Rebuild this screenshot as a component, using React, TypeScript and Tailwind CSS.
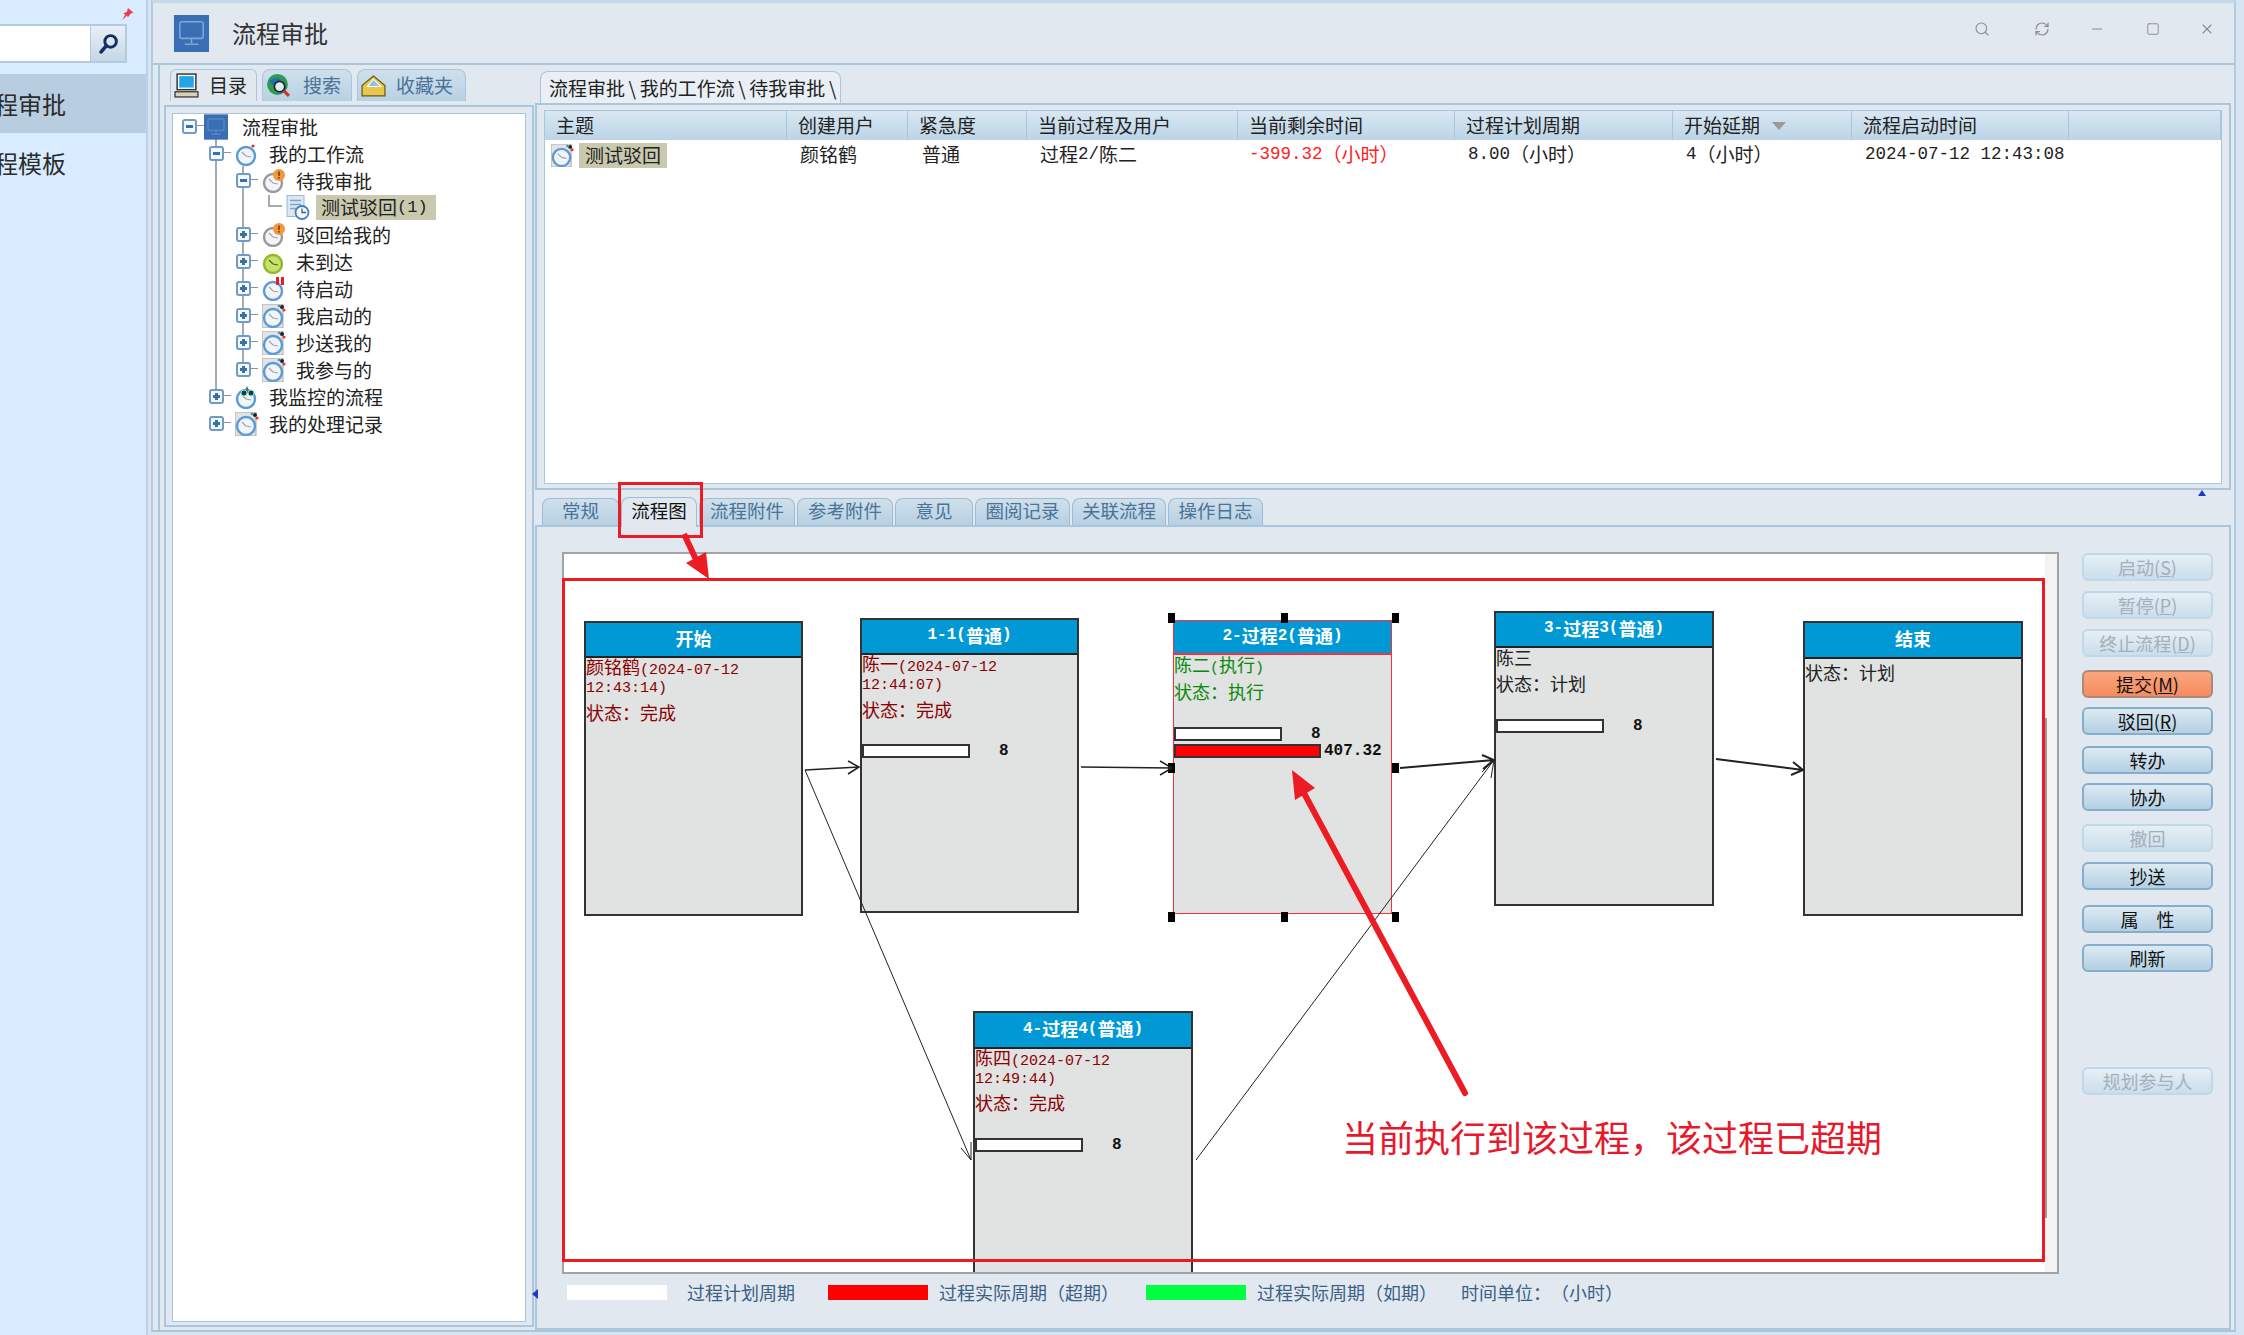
import React from "react";
import { Search, RefreshCw, Minus, Square, X } from "lucide-react";

const Mono = ({ children, className = "" }: { children: React.ReactNode; className?: string }) => (
  <span className={"font-['Liberation_Mono'] leading-[0] " + className}>{children}</span>
);

type ClockKind = "blue" | "warn" | "green" | "alert" | "framed" | "watch";

function Clock({ kind, size = 24 }: { kind: ClockKind; size?: number }) {
  const ring = kind === "warn" ? "#9a9a9a" : kind === "green" ? "#8dba2e" : "#5d9ad6";
  return (
    <svg width={size} height={size} viewBox="0 0 24 24" className="block shrink-0">
      {kind === "framed" && <rect x="0" y="0" width="21" height="24" fill="#e3e3e3" stroke="#9a9a9a" strokeWidth="0.8" />}
      {kind === "framed" && (
        <>
          <circle cx="20" cy="3" r="2" fill="#222" />
          <circle cx="22" cy="6" r="1.6" fill="#e33" />
          <circle cx="17" cy="2" r="1.3" fill="#39c" />
        </>
      )}
      <circle cx="11" cy="14" r="9" fill={kind === "green" ? "#cbe06a" : "#f1f4f8"} stroke={ring} strokeWidth="2.4" />
      <path d="M11 14 L7 10 M11 14 L16 15" stroke={kind === "green" ? "#3d6b10" : "#a3a3a3"} strokeWidth="1.2" fill="none" />
      {kind === "blue" && <circle cx="18" cy="4" r="1.6" fill="#d33" />}
      {kind === "warn" && (
        <>
          <circle cx="17" cy="6" r="6" fill="#f0993a" />
          <rect x="16.2" y="2.5" width="1.6" height="4.5" fill="#7a3a08" />
          <rect x="16.2" y="8" width="1.6" height="1.6" fill="#7a3a08" />
        </>
      )}
      {kind === "alert" && (
        <>
          <rect x="14" y="0" width="3" height="8" fill="#e0202a" />
          <rect x="19" y="0" width="3" height="8" fill="#e0202a" />
        </>
      )}
      {kind === "watch" && (
        <>
          <path d="M9 8 L12 1 L15 8 Z" fill="#666" />
          <circle cx="9" cy="8" r="3" fill="#333" stroke="#6fe" strokeWidth="1" />
          <circle cx="16" cy="8" r="3" fill="#333" stroke="#6fe" strokeWidth="1" />
        </>
      )}
    </svg>
  );
}

function MonitorTile({ className, stroke }: { className: string; stroke: string }) {
  return (
    <svg viewBox="0 0 36 38" className={"block shrink-0 " + className}>
      <rect width="36" height="38" fill="#3a6fb5" />
      <rect x="6" y="7" width="24" height="17" rx="2" fill="none" stroke={stroke} strokeWidth="1.6" />
      <path d="M18 24 V29 M11 30 H25" stroke={stroke} strokeWidth="1.6" fill="none" />
    </svg>
  );
}

function Toggle({ open }: { open: boolean }) {
  return (
    <span className="relative block w-[15px] h-[15px] shrink-0 rounded-[3px] border-2 border-[#6f9bc4] bg-[#f5f9fc]">
      <span className="absolute left-[2px] top-[4px] w-[7px] h-[3px] bg-[#3a6fa8]" />
      {!open && <span className="absolute left-[4px] top-[2px] w-[3px] h-[7px] bg-[#3a6fa8]" />}
      <span className="absolute left-[13px] top-[4px] w-[7px] h-px bg-[#8a929a]" />
    </span>
  );
}

function TreeRow({ level, open, icon, label }: { level: 0 | 1 | 2; open: boolean; icon: React.ReactNode; label: string }) {
  const pad = level === 0 ? "pl-[9px]" : level === 1 ? "pl-[36px]" : "pl-[63px]";
  return (
    <div className={"relative flex items-center h-[27px] " + pad}>
      <Toggle open={open} />
      <span className="ml-[11px] w-[24px] flex items-center">{icon}</span>
      <span className="ml-[10px] text-[19px] leading-[27px] text-[#222] whitespace-nowrap">{label}</span>
    </div>
  );
}

const HEAD = ["主题", "创建用户", "紧急度", "当前过程及用户", "当前剩余时间", "过程计划周期", "开始延期", "流程启动时间", ""];

function Slash() {
  return <span className="inline-block w-[19px] text-center">\</span>;
}

function Btn({ children, state = "on", className = "" }: { children: React.ReactNode; state?: "on" | "off" | "hot"; className?: string }) {
  const look =
    state === "on"
      ? "border-[#86aecb] from-[#dceaf3] to-[#b4cfe2] text-[#111]"
      : state === "off"
      ? "border-[#c0d8e8] from-[#e6eff5] to-[#cadeeb] text-[#a3afba]"
      : "border-[#a98a7c] from-[#fba57e] to-[#f58c5d] text-[#111]";
  return (
    <div className={"flex items-center justify-center h-[28px] rounded-[6px] border-2 bg-gradient-to-b text-[18px] leading-none whitespace-nowrap " + look + " " + className}>
      {children}
    </div>
  );
}

function Bar({ value, red = false, mt = "mt-[27px]" }: { value: string; red?: boolean; mt?: string }) {
  return (
    <div className={"flex items-center h-[14px] " + mt}>
      <div className={"h-[14px] border-2 border-[#333] " + (red ? "w-[147px] bg-[#ff0000]" : "w-[108px] bg-white")} />
      <span className={"font-['Liberation_Mono'] font-bold text-[16px] text-[#111] " + (red ? "ml-[3px]" : "ml-[29px]")}>{value}</span>
    </div>
  );
}

function Node({ pos, headH, title, tone, selected = false, children }: { pos: string; headH: string; title: React.ReactNode; tone: string; selected?: boolean; children: React.ReactNode }) {
  return (
    <div className={"absolute flex flex-col bg-[#e1e2e2] " + pos + " " + (selected ? "border border-[#f5303f]" : "border-2 border-[#333]")}>
      <div className={"flex items-center justify-center shrink-0 bg-[#0099d5] text-white font-bold text-[18px] pb-[3px] " + headH + " " + (selected ? "border-b-2 border-[#f5303f]" : "border-b-2 border-[#222]")}>
        {title}
      </div>
      <div className={"flex-1 text-[18px] leading-[18px] whitespace-nowrap " + tone}>{children}</div>
    </div>
  );
}

function Handle({ pos }: { pos: string }) {
  return <span className={"absolute w-[7px] h-[10px] bg-black " + pos} />;
}

const BOTTOM_TABS = [
  ["常规", "w-[77px]"],
  ["流程图", "w-[76px]"],
  ["流程附件", "w-[96px]"],
  ["参考附件", "w-[96px]"],
  ["意见", "w-[78px]"],
  ["圈阅记录", "w-[95px]"],
  ["关联流程", "w-[94px]"],
  ["操作日志", "w-[95px]"],
];

export default function App() {
  return (
    <div className="relative flex w-[2244px] h-[1335px] overflow-hidden bg-[#d6e5f1] text-[#222] font-['Noto_Sans_CJK_SC','Noto_Sans',sans-serif]">
      {/* sidebar */}
      <aside className="relative w-[148px] shrink-0 overflow-hidden bg-[#d8ebff] border-r-2 border-[#bcd2e4]">
        <svg viewBox="0 0 14 14" className="absolute left-[120px] top-[8px] w-[14px] h-[13px]">
          <path d="M8 0 L14 5 L11 6 L8 10 L7 8 L2 13 L5 7 L3 6 L7 4 Z" fill="#f0394a" />
        </svg>
        <div className="flex mt-[24px] h-[39px] w-[127px] border-2 border-l-0 border-[#b4cbde]">
          <div className="w-[90px] bg-white" />
          <div className="flex-1 flex items-center justify-center bg-gradient-to-b from-[#e8f0f6] to-[#c6d7e5] border-l border-[#b4cbde]">
            <svg viewBox="0 0 20 20" className="w-[21px] h-[21px]">
              <circle cx="12" cy="8" r="5.5" fill="none" stroke="#12305f" strokeWidth="2.8" />
              <path d="M8 12 L3 18" stroke="#12305f" strokeWidth="3.4" strokeLinecap="round" />
            </svg>
          </div>
        </div>
        <div className="mt-[11px] h-[59px] bg-[#b8cde0] flex items-center">
          <span className="-ml-[30px] text-[24px] text-[#2b2b2b] whitespace-nowrap">流程审批</span>
        </div>
        <div className="h-[59px] flex items-center">
          <span className="-ml-[30px] text-[24px] text-[#2b2b2b] whitespace-nowrap">流程模板</span>
        </div>
      </aside>

      {/* main window */}
      <main className="ml-[3px] w-[2085px] h-[1332px] flex flex-col bg-[#e1e8f0] border-t-[3px] border-[#c3d8e8] border-r-2 border-r-[#b1cbdf] border-l-2 border-l-[#b1cbdf] border-b-2 border-b-[#a9c6dc]">
        <header className="flex items-center h-[62px] shrink-0 border-b-2 border-[#a9c6dc]">
          <MonitorTile className="ml-[20px] w-[37px] h-[37px]" stroke="#7fa6d4" />
          <h1 className="ml-[22px] text-[24px] font-normal text-[#333]">流程审批</h1>
          <div className="ml-auto flex items-center text-[#8c8c8c] pr-[19px] pb-[8px]">
            <Search size={16} strokeWidth={1.6} />
            <RefreshCw size={16} strokeWidth={1.8} className="ml-[44px]" />
            <Minus size={16} strokeWidth={1.6} className="ml-[39px]" />
            <Square size={14} strokeWidth={1.6} className="ml-[41px]" />
            <X size={16} strokeWidth={1.6} className="ml-[39px]" />
          </div>
        </header>

        <div className="flex flex-1 min-h-0">
          {/* left panel */}
          <section className="w-[377px] shrink-0 ml-[5px] flex flex-col border-l-2 border-[#a9c6dc] pt-[4px]">
            <div className="flex h-[32px] pl-[10px] items-stretch">
              <div className="flex items-center w-[87px] rounded-t-[6px] border border-b-0 border-[#a9c6dc] bg-[#e1e8f0]">
                <svg viewBox="0 0 24 24" className="ml-[3px] w-[25px] h-[25px]">
                  <rect x="3" y="1" width="18" height="15" fill="#fff" stroke="#333" strokeWidth="1.4" />
                  <rect x="5" y="3" width="14" height="11" fill="#22a6e8" />
                  <rect x="1" y="18" width="22" height="5" fill="#d8d2b8" stroke="#333" strokeWidth="1.2" />
                </svg>
                <span className="ml-[10px] text-[19px] text-[#222]">目录</span>
              </div>
              <div className="ml-[5px] flex items-center w-[90px] rounded-t-[8px] border border-b-0 border-[#a9c6dc] bg-gradient-to-b from-[#cfe0ec] to-[#b8d1e3]">
                <svg viewBox="0 0 24 24" className="ml-[3px] w-[25px] h-[25px]">
                  <circle cx="11" cy="11" r="10" fill="#2e9b55" />
                  <path d="M3 8 Q9 3 14 6 Q10 11 6 11 Z M12 16 Q17 12 20 14 Q17 20 13 20 Z" fill="#1f6fb8" />
                  <circle cx="13" cy="13" r="5" fill="#dcecf7" stroke="#222" strokeWidth="1.6" />
                  <path d="M17 17 L22 22" stroke="#d4332a" strokeWidth="3" />
                </svg>
                <span className="ml-[12px] text-[19px] text-[#4a7396]">搜索</span>
              </div>
              <div className="ml-[5px] flex items-center w-[109px] rounded-t-[8px] border border-b-0 border-[#a9c6dc] bg-gradient-to-b from-[#cfe0ec] to-[#b8d1e3]">
                <svg viewBox="0 0 24 24" className="ml-[3px] w-[25px] h-[25px]">
                  <path d="M1 12 L12 3 L23 12 V22 H1 Z" fill="#e8c64a" stroke="#6a5a1a" strokeWidth="1.2" />
                  <path d="M6 13 L12 6 L19 13 Z" fill="#8fc0ea" stroke="#fff" strokeWidth="1" />
                </svg>
                <span className="ml-[10px] text-[19px] text-[#4a7396]">收藏夹</span>
              </div>
            </div>
            <div className="flex-1 mt-[4px] mr-[1px] ml-[4px] mb-[3px] border-2 border-[#a9c6dc] p-[6px] pb-[3px]">
              <div className="relative h-full bg-white border border-[#a9c6dc]">
                <span className="absolute left-[42px] top-[25px] w-[2px] h-[258px] bg-[#a2aab2]" />
                <span className="absolute left-[69px] top-[52px] w-[2px] h-[204px] bg-[#a2aab2]" />
                <div className="relative -mt-px">
                  <TreeRow level={0} open icon={<MonitorTile className="-ml-[4px] w-[24px] h-[26px]" stroke="#5f8fc6" />} label="流程审批" />
                  <TreeRow level={1} open icon={<Clock kind="blue" />} label="我的工作流" />
                  <TreeRow level={2} open icon={<Clock kind="warn" />} label="待我审批" />
                  <div className="flex items-center h-[27px] pl-[95px]">
                    <span className="block self-start mt-[1px] w-[14px] h-[12px] border-l-2 border-b-2 border-[#a2aab2]" />
                    <svg viewBox="0 0 24 24" className="ml-[4px] w-[24px] h-[25px]">
                      <rect x="1" y="0" width="17" height="21" fill="#dbe7f3" stroke="#9db9d6" />
                      <path d="M4 5 H15 M4 9 H15 M4 13 H12" stroke="#7fa2c8" strokeWidth="1.6" />
                      <circle cx="16" cy="17" r="6.5" fill="#f5f9fc" stroke="#3f80bd" strokeWidth="1.8" />
                      <path d="M16 13 V17 H20" stroke="#3f5f80" strokeWidth="1.3" fill="none" />
                    </svg>
                    <span className="ml-[6px] h-[25px] w-[120px] flex items-center pl-[5px] bg-[#c8c9ae] text-[19px] text-[#222] whitespace-nowrap">
                      测试驳回<Mono className="text-[17px]">(1)</Mono>
                    </span>
                  </div>
                  <TreeRow level={2} open={false} icon={<Clock kind="warn" />} label="驳回给我的" />
                  <TreeRow level={2} open={false} icon={<Clock kind="green" />} label="未到达" />
                  <TreeRow level={2} open={false} icon={<Clock kind="alert" />} label="待启动" />
                  <TreeRow level={2} open={false} icon={<Clock kind="framed" />} label="我启动的" />
                  <TreeRow level={2} open={false} icon={<Clock kind="framed" />} label="抄送我的" />
                  <TreeRow level={2} open={false} icon={<Clock kind="framed" />} label="我参与的" />
                  <TreeRow level={1} open={false} icon={<Clock kind="watch" />} label="我监控的流程" />
                  <TreeRow level={1} open={false} icon={<Clock kind="framed" />} label="我的处理记录" />
                </div>
              </div>
            </div>
          </section>

          {/* right panel */}
          <section className="flex-1 min-w-0 flex flex-col pr-[3px]">
            {/* path tab */}
            <div className="h-[38px] shrink-0 flex items-end pl-[5px]">
              <div className="h-[32px] w-[301px] flex items-center pl-[8px] rounded-t-[8px] border border-b-0 border-[#a9c6dc] bg-[#e9eff5] text-[19px] leading-none whitespace-nowrap">
                流程审批<Slash />我的工作流<Slash />待我审批<Slash />
              </div>
            </div>
            <div className="h-[387px] shrink-0 border-2 border-[#a9c6dc] px-[7px] pt-[5px] pb-[4px]">
              <div className="h-full bg-white border border-[#a9c6dc]">
                <div className="grid grid-cols-[242px_121px_119px_211px_217px_218px_179px_217px_1fr] h-[29px] bg-gradient-to-b from-[#d8e7f2] to-[#bcd4e6]">
                  {HEAD.map((h, i) => (
                    <div key={i} className="flex items-center pl-[11px] text-[19px] text-[#222] border-r border-[#a9c6dc] whitespace-nowrap">
                      {h}
                      {h === "开始延期" && <span className="ml-[12px] w-0 h-0 border-x-[7px] border-x-transparent border-t-[8px] border-t-[#9a9a9a]" />}
                    </div>
                  ))}
                </div>
                <div className="grid grid-cols-[242px_121px_119px_211px_217px_218px_179px_217px_1fr] h-[25px] text-[19px] text-[#222]">
                  <div className="flex items-center pl-[6px]">
                    <Clock kind="framed" size={23} />
                    <span className="ml-[5px] h-[25px] w-[88px] flex items-center pl-[6px] pb-[2px] bg-[#c8c9ae]">测试驳回</span>
                  </div>
                  <div className="flex items-center pl-[13px] pb-[3px]">颜铭鹤</div>
                  <div className="flex items-center pl-[14px] pb-[3px]">普通</div>
                  <div className="flex items-center pl-[13px] pb-[3px]">过程<Mono className="text-[17.5px]">2/</Mono>陈二</div>
                  <div className="flex items-center pl-[11px] pb-[3px] text-[#ff2020] [text-spacing-trim:space-all]"><Mono className="text-[17.5px]">-399.32</Mono>（小时）</div>
                  <div className="flex items-center pl-[13px] pb-[3px] [text-spacing-trim:space-all]"><Mono className="text-[17.5px]">8.00</Mono>（小时）</div>
                  <div className="flex items-center pl-[13px] pb-[3px] [text-spacing-trim:space-all]"><Mono className="text-[17.5px]">4</Mono>（小时）</div>
                  <div className="flex items-center pl-[13px] pb-[3px]"><Mono className="text-[17.5px]">2024-07-12 12:43:08</Mono></div>
                  <div />
                </div>
              </div>
            </div>

            {/* bottom tabs */}
            <div className="relative h-[35px] shrink-0 flex items-end pl-[7px] gap-[2px]">
              {BOTTOM_TABS.map(([t, w], i) => (
                <div
                  key={t}
                  className={
                    "flex items-center justify-center border border-b-0 border-[#9dbdd6] rounded-t-[8px] text-[18.5px] pb-[3px] whitespace-nowrap " +
                    w +
                    (i === 1 ? " h-[30px] bg-[#e1e8f0] text-[#111] -mb-[2px]" : " h-[27px] bg-gradient-to-b from-[#d0e0ec] to-[#b6d0e3] text-[#4a7396]")
                  }
                >
                  {t}
                </div>
              ))}
              <svg viewBox="0 0 8 6" className="absolute left-[1663px] top-[0px] w-[8px] h-[6px]">
                <path d="M4 0 L8 6 H0 Z" fill="#2236c8" />
              </svg>
            </div>

            {/* details */}
            <div className="flex-1 min-h-0 flex flex-col border-l-2 border-r-2 border-t-2 border-b-2 border-[#a9c6dc]">
              <div className="flex pt-[25px] pl-[25px]">
                <div className="relative w-[1497px] h-[722px] shrink-0 overflow-hidden bg-white border-2 border-[#a0a4a8]">
                  <div className="absolute left-[1481px] top-0 w-[14px] h-full bg-[#f3f3f3]" />
                  <div className="absolute left-[1481px] top-[164px] w-[2px] h-[500px] bg-[#9a9a9a]" />

                  <Node pos="left-[20px] top-[67px] w-[219px] h-[295px]" headH="h-[35px]" title="开始" tone="text-[#8b0000]">
                    <div className="-mt-px">颜铭鹤<Mono className="text-[15px]">(2024-07-12</Mono></div>
                    <div><Mono className="text-[15px]">12:43:14)</Mono></div>
                    <div className="mt-[10px]">状态：完成</div>
                  </Node>

                  <Node pos="left-[296px] top-[64px] w-[219px] h-[295px]" headH="h-[35px]" title={<><Mono className="text-[16px]">1-1(</Mono>普通<Mono className="text-[16px]">)</Mono></>} tone="text-[#8b0000]">
                    <div className="-mt-px">陈一<Mono className="text-[15px]">(2024-07-12</Mono></div>
                    <div><Mono className="text-[15px]">12:44:07)</Mono></div>
                    <div className="mt-[10px]">状态：完成</div>
                    <Bar value="8" mt="mt-[26px]" />
                  </Node>

                  <Node pos="left-[609px] top-[66px] w-[219px] h-[294px]" headH="h-[34px]" title={<><Mono className="text-[16px]">2-</Mono>过程<Mono className="text-[16px]">2(</Mono>普通<Mono className="text-[16px]">)</Mono></>} tone="text-[#0a8a0a]" selected>
                    <div>陈二<Mono className="text-[15px]">(</Mono>执行<Mono className="text-[15px]">)</Mono></div>
                    <div className="mt-[9px]">状态：执行</div>
                    <Bar value="8" />
                    <Bar value="407.32" red mt="mt-[3px]" />
                  </Node>

                  <Node pos="left-[930px] top-[57px] w-[220px] h-[295px]" headH="h-[35px]" title={<><Mono className="text-[16px]">3-</Mono>过程<Mono className="text-[16px]">3(</Mono>普通<Mono className="text-[16px]">)</Mono></>} tone="text-[#222]">
                    <div>陈三</div>
                    <div className="mt-[8px]">状态：计划</div>
                    <Bar value="8" />
                  </Node>

                  <Node pos="left-[1239px] top-[67px] w-[220px] h-[295px]" headH="h-[36px]" title="结束" tone="text-[#222]">
                    <div className="pt-[4px]">状态：计划</div>
                  </Node>

                  <Node pos="left-[409px] top-[457px] w-[220px] h-[300px]" headH="h-[36px]" title={<><Mono className="text-[16px]">4-</Mono>过程<Mono className="text-[16px]">4(</Mono>普通<Mono className="text-[16px]">)</Mono></>} tone="text-[#8b0000]">
                    <div className="-mt-px">陈四<Mono className="text-[15px]">(2024-07-12</Mono></div>
                    <div><Mono className="text-[15px]">12:49:44)</Mono></div>
                    <div className="mt-[9px]">状态：完成</div>
                    <Bar value="8" />
                  </Node>

                  <Handle pos="left-[604px] top-[59px]" />
                  <Handle pos="left-[717px] top-[59px]" />
                  <Handle pos="left-[828px] top-[59px]" />
                  <Handle pos="left-[604px] top-[209px]" />
                  <Handle pos="left-[828px] top-[209px]" />
                  <Handle pos="left-[604px] top-[358px]" />
                  <Handle pos="left-[717px] top-[358px]" />
                  <Handle pos="left-[828px] top-[358px]" />

                  <svg viewBox="564 554 1493 718" className="absolute left-0 top-0 w-[1493px] h-[718px]" fill="none" stroke="#222" strokeWidth="1">
                    <path d="M805 770 L859 767 M848 761 L859 767 L848 774" strokeWidth="1.5" />
                    <path d="M1081 767 L1172 768 M1160 761 L1172 768 L1160 775" strokeWidth="1.5" />
                    <path d="M1400 768 L1494 760 M1482 755 L1494 760 L1483 769" strokeWidth="2" />
                    <path d="M1716 759 L1803 770 M1793 762 L1803 770 L1791 775" strokeWidth="2" />
                    <path d="M805 770 L971 1160 M961 1148 L971 1160 L971 1142" />
                    <path d="M1196 1160 L1494 760 M1482 772 L1494 760 L1491 778" />
                  </svg>
                </div>

                <div className="ml-[23px] w-[131px] shrink-0 flex flex-col pt-[1px]">
                  <Btn state="off">启动(<u>S</u>)</Btn>
                  <Btn state="off" className="mt-[10px]">暂停(<u>P</u>)</Btn>
                  <Btn state="off" className="mt-[10px]">终止流程(<u>D</u>)</Btn>
                  <Btn state="hot" className="mt-[13px]">提交(<u>M</u>)</Btn>
                  <Btn className="mt-[9px]">驳回(<u>R</u>)</Btn>
                  <Btn className="mt-[11px]">转办</Btn>
                  <Btn className="mt-[9px]">协办</Btn>
                  <Btn state="off" className="mt-[13px]">撤回</Btn>
                  <Btn className="mt-[10px]">抄送</Btn>
                  <Btn className="mt-[15px]">属&emsp;性</Btn>
                  <Btn className="mt-[11px]">刷新</Btn>
                  <Btn state="off" className="mt-[95px]">规划参与人</Btn>
                </div>
              </div>

              <div className="relative flex items-center h-[36px] pl-[30px] text-[18px] text-[#3b5f85] whitespace-nowrap [text-spacing-trim:space-all]">
                <svg viewBox="0 0 6 10" className="absolute -left-[5px] top-[15px] w-[6px] h-[10px]">
                  <path d="M0 5 L6 0 V10 Z" fill="#2236c8" />
                </svg>
                <span className="w-[100px] h-[15px] bg-white" />
                <span className="ml-[20px] w-[108px]">过程计划周期</span>
                <span className="ml-[33px] w-[100px] h-[15px] bg-[#ff0000]" />
                <span className="ml-[11px] w-[173px]">过程实际周期（超期）</span>
                <span className="ml-[34px] w-[100px] h-[15px] bg-[#00ff40]" />
                <span className="ml-[11px] w-[173px]">过程实际周期（如期）</span>
                <span className="ml-[31px]">时间单位：（小时）</span>
              </div>
            </div>
          </section>
        </div>
      </main>

      {/* annotations laid over the screenshot */}
      <svg viewBox="0 0 2244 1335" className="absolute left-0 top-0 w-[2244px] h-[1335px] pointer-events-none" fill="none">
        <rect x="619.5" y="483.5" width="82" height="53" stroke="#ed1c24" strokeWidth="3" />
        <rect x="563.5" y="579.5" width="1480" height="681" stroke="#ed1c24" strokeWidth="3" />
        <path d="M684 534 L700 568" stroke="#ed1c24" strokeWidth="6" />
        <path d="M709 579 L686 563 L706 552 Z" fill="#ed1c24" />
        <path d="M1465 1093 L1305 795" stroke="#ed1c24" strokeWidth="6" strokeLinecap="round" />
        <path d="M1292 770 L1295 800 L1315 788 Z" fill="#ed1c24" />
      </svg>
      <div className="absolute left-[1342px] top-[1110px] text-[36px] leading-[52px] text-[#e8192c] whitespace-nowrap">
        当前执行到该过程，该过程已超期
      </div>
    </div>
  );
}
